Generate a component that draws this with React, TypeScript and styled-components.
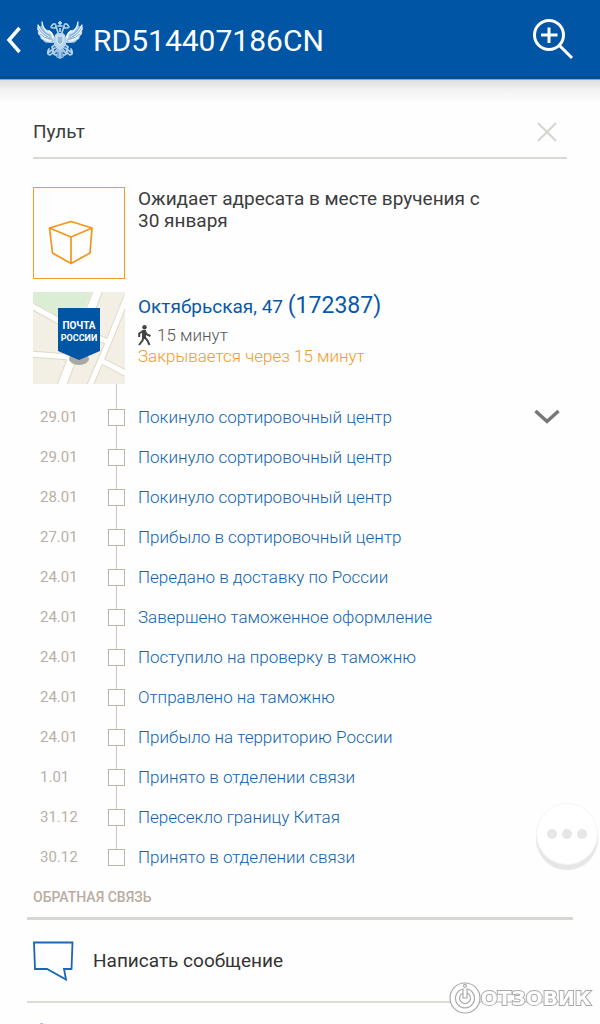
import React from 'react';
import styled, { createGlobalStyle } from 'styled-components';

const GlobalStyle = createGlobalStyle`
  *, *::before, *::after { box-sizing: border-box; }
  body {
    margin: 0;
    background: #fefefe;
    color: #3c3c3c;
    font-family: Roboto, "Noto Sans", sans-serif;
  }
  h1, h2, p, ol { margin: 0; padding: 0; font-weight: 400; }
  svg { display: block; flex: none; }
`;

const Page = styled.div`
  height: 100vh;
  overflow: hidden;
  display: flex;
  flex-direction: column;
`;

const Header = styled.header`
  flex: none;
  height: 79px;
  display: flex;
  align-items: center;
  padding: 3px 26px 0 6px;
  background: #0055a4;
  border-bottom: 3px solid #004c97;
`;

const HeaderShade = styled.div`
  flex: none;
  height: 24px;
  border-top: 1px solid #8aa6c2;
  background: linear-gradient(#dedede, #f3f3f3 45%, #fefefe);
`;

const IconButton = styled.button`
  display: flex;
  padding: 0;
  border: 0;
  background: none;
  cursor: pointer;
`;

const TrackNumber = styled.h1`
  flex: 1;
  margin-left: 10px;
  padding-top: 2px;
  color: #fff;
  font-size: 30px;
  line-height: 36px;
  font-weight: 400;
`;

const Emblem = styled.svg`
  margin-left: 15px;
`;

const Content = styled.main`
  flex: none;
  padding: 0 33px;
`;

const TitleBar = styled.div`
  display: flex;
  align-items: center;
  justify-content: space-between;
  height: 56px;
  padding: 4px 10px 0 0;
  border-bottom: 2px solid #d9d9d3;
`;

const Title = styled.h2`
  font-size: 19px;
  line-height: 24px;
`;

const Card = styled.section`
  display: flex;
  gap: 13px;
`;

const StatusCard = styled(Card)`
  margin-top: 28px;
`;

const OfficeCard = styled(Card)`
  margin-top: 13px;
`;

const ParcelTile = styled.div`
  flex: none;
  width: 92px;
  height: 92px;
  padding: 32px 0 0 14px;
  border: 1px solid #f39b26;
`;

const StatusText = styled.p`
  max-width: 356px;
  padding-top: 1px;
  font-size: 19px;
  line-height: 22px;
`;

const OfficeInfo = styled.div`
  display: flex;
  flex-direction: column;
  align-items: flex-start;
`;

const OfficeLink = styled.a`
  color: #0a58a8;
  font-size: 19px;
  line-height: 28px;
  text-decoration: none;
`;

const PostalIndex = styled.span`
  font-size: 23px;
`;

const Walk = styled.p`
  display: flex;
  align-items: center;
  gap: 6px;
  margin-top: 4px;
  color: #555;
  font-size: 17px;
  line-height: 21px;
  font-weight: 300;
`;

const Closing = styled.p`
  color: #f39b26;
  font-size: 17px;
  line-height: 20px;
  font-weight: 300;
`;

const Timeline = styled.ol`
  padding-top: 13px;
  list-style: none;
  background: linear-gradient(#cdc6bf, #cdc6bf) 83px 0 / 1px calc(100% - 20px) no-repeat;
`;

const Step = styled.li`
  display: grid;
  grid-template-columns: 75px 17px 1fr auto;
  align-items: center;
  height: 40px;
  padding-right: 7px;
`;

const StepDate = styled.time`
  padding-left: 7px;
  color: #b9b0a7;
  font-size: 15px;
  line-height: 20px;
`;

const StepMark = styled.span`
  width: 17px;
  height: 17px;
  border: 1px solid #bdb4ac;
  background: #fefefe;
`;

const StepText = styled.span`
  padding-left: 13px;
  color: #1062ae;
  font-size: 17px;
  line-height: 22px;
  font-weight: 300;
`;

const Feedback = styled.section`
  margin: 0 -6px;
`;

const FeedbackTitle = styled.h2`
  && { font-weight: 500; }
  padding: 10px 6px;
  border-bottom: 3px solid #d9d5cf;
  color: #b9ada2;
  font-size: 14px;
  line-height: 20px;
`;

const FeedbackRow = styled.button`
  display: flex;
  align-items: center;
  gap: 19px;
  width: 100%;
  height: 83px;
  padding: 0 6px;
  border: 0;
  border-bottom: 2px solid #dedad5;
  background: none;
  color: #333;
  font: 400 19px/24px Roboto, "Noto Sans", sans-serif;
  text-align: left;
  cursor: pointer;
`;

const NextRow = styled.div`
  padding: 20px 10px;
`;

const MoreButton = styled.button`
  position: fixed;
  right: 2px;
  bottom: 159px;
  display: flex;
  align-items: center;
  justify-content: center;
  gap: 5px;
  width: 62px;
  height: 62px;
  padding: 0;
  border: 1px solid #f3f3f3;
  border-radius: 50%;
  background: #fff;
  box-shadow: 0 5px 1px #e6e6e6;
  cursor: pointer;
`;

const Dot = styled.span`
  width: 10px;
  height: 10px;
  border-radius: 50%;
  background: #e6e6e6;
`;

const Watermark = styled.div`
  position: fixed;
  right: 9px;
  bottom: 10px;
  display: flex;
  align-items: center;
`;

const WatermarkText = styled.span`
  color: #fefefe;
  font: 700 20px/24px "DejaVu Sans", sans-serif;
  -webkit-text-stroke: 2px #aaa;
  paint-order: stroke fill;
`;

const steps = [
  ['29.01', 'Покинуло сортировочный центр'],
  ['29.01', 'Покинуло сортировочный центр'],
  ['28.01', 'Покинуло сортировочный центр'],
  ['27.01', 'Прибыло в сортировочный центр'],
  ['24.01', 'Передано в доставку по России'],
  ['24.01', 'Завершено таможенное оформление'],
  ['24.01', 'Поступило на проверку в таможню'],
  ['24.01', 'Отправлено на таможню'],
  ['24.01', 'Прибыло на территорию России'],
  ['1.01', 'Принято в отделении связи'],
  ['31.12', 'Пересекло границу Китая'],
  ['30.12', 'Принято в отделении связи'],
];

const Wing = () => (
  <g fill="none" strokeLinecap="round">
    <path d="M5 1Q7 8 11 9Q15 10 17 15L19 22L12 22Q7 22 6 19Q3 18 3 15Q0 13 1 10Q-1 7 1 4L4 6Z" fill="#a9c9e6" />
    <path stroke="#edf5fc" strokeWidth="1.3" d="M5 1Q6 9 12 12M1 4Q4 12 11 15M1 8Q5 15 11 17M2 12Q6 17 12 19M5 17Q9 20 14 20" />
    <path stroke="#5e97cb" strokeWidth=".8" d="M3 5Q6 12 12 14M2 8Q6 14 11 16M3 13Q7 17 13 18M13 11Q17 13 18 19" />
    <path stroke="#fff" strokeWidth="1.6" d="M12 10Q16 13 16 17" />
    <path stroke="#b4d1ea" strokeWidth="1.8" d="M20 22L15 26Q18 32 13 34Q9 33 12 28M18 27L12 31M20 29Q14 34 20 34" />
    <path stroke="#b4d1ea" strokeWidth="1.6" d="M14 6Q16 2 18 3Q20 5 18 7H15M19 5Q20 9 22 14" />
  </g>
);

const Eagle = () => (
  <Emblem width="46" height="38" viewBox="0 0 46 38" aria-hidden="true">
    <Wing />
    <g transform="translate(46 0) scale(-1 1)"><Wing /></g>
    <path d="M18 14Q20 11 23 12Q26 11 28 14L30 20L27 27L23 30L19 27L16 20Z" fill="#b9d5ec" />
    <path d="M20 15h6v6l-3 3-3-3z" fill="#8fb9de" stroke="#e6f1fa" />
    <path d="M19 27L21 29H25L27 27L26 34L27 36L23 38L19 36L20 34Z" fill="#9fc3e3" />
    <path d="M21 31v5M25 31v5" stroke="#4585c2" />
    <path d="M23 0v4M21 2h4M20.500 5h5M23 7v4" stroke="#cfe2f3" strokeWidth="1.500" />
  </Emblem>
);

const OfficeMap = () => (
  <svg width="92" height="92" viewBox="0 0 92 92" role="img" aria-label="ПОЧТА РОССИИ">
    <rect width="92" height="92" fill="#f3efe4" />
    <path d="M0 0H59L45 30L24 25L0 11Z" fill="#dcedd6" />
    <g fill="none" stroke="#e0dac5" strokeWidth="10">
      <path d="M66 -4L27 98" />
      <path strokeWidth="7" d="M-3 13L26 29L75 50M94 4L76 49L67 70L55 98M67 68L100 85M-3 62L36 65" />
    </g>
    <g fill="none" stroke="#fff" strokeWidth="8">
      <path d="M66 -4L27 98" />
      <path strokeWidth="5" d="M-3 13L26 29L75 50M94 4L76 49L67 70L55 98M67 68L100 85M-3 62L36 65" />
    </g>
    <ellipse cx="46" cy="67" rx="10" ry="6" fill="#aaa8a3" />
    <path d="M25 16H67V59L46 68L25 59Z" fill="#0055a4" />
    <g fill="#fff" fontFamily="Roboto, sans-serif" fontWeight="700" textAnchor="middle">
      <text x="46" y="37" fontSize="10">ПОЧТА</text>
      <text x="46" y="49" fontSize="9">РОССИИ</text>
    </g>
  </svg>
);

export default function App() {
  return (
    <Page>
      <GlobalStyle />
      <Header>
        <IconButton aria-label="Назад">
          <svg width="16" height="28" viewBox="0 0 16 28" fill="none" stroke="#fff" strokeWidth="3.5">
            <path d="M13.500 2L3 14L13.500 26" />
          </svg>
        </IconButton>
        <Eagle />
        <TrackNumber>RD514407186CN</TrackNumber>
        <IconButton aria-label="Поиск">
          <svg width="42" height="42" viewBox="0 0 42 42" fill="none" stroke="#fff" strokeWidth="3">
            <circle cx="17" cy="16" r="14.500" />
            <path d="M17 8.500V24M9 16H25.500M27.500 26.500L40 39" />
          </svg>
        </IconButton>
      </Header>
      <HeaderShade />
      <Content>
        <TitleBar>
          <Title>Пульт</Title>
          <IconButton aria-label="Закрыть">
            <svg width="20" height="20" viewBox="0 0 20 20" stroke="#d5d5cf" strokeWidth="2">
              <path d="M1 1L19 19M19 1L1 19" />
            </svg>
          </IconButton>
        </TitleBar>
        <StatusCard>
          <ParcelTile>
            <svg width="46" height="46" viewBox="0 0 46 46" fill="none" stroke="#f3951a" strokeWidth="1.7" strokeLinejoin="round">
              <path d="M1.500 8L23 1.500L44 8L42 33L23 43.500L4.500 33ZM1.500 8L23 17L44 8M23 17V43.500" />
            </svg>
          </ParcelTile>
          <StatusText>Ожидает адресата в месте вручения с 30 января</StatusText>
        </StatusCard>
        <OfficeCard>
          <OfficeMap />
          <OfficeInfo>
            <OfficeLink href="#office">
              Октябрьская, 47 <PostalIndex>(172387)</PostalIndex>
            </OfficeLink>
            <Walk>
              <svg width="13" height="21" viewBox="0 0 13 21" fill="none" stroke="#444" strokeWidth="2" aria-hidden="true">
                <circle cx="6.500" cy="2.200" r="2.200" fill="#444" stroke="none" />
                <path d="M6 5V13" strokeWidth="4" />
                <path d="M5 6L1.200 8.500V12M7 6.500L9 9.500L12.500 11M5.500 12L4.500 15.500L1 20M6.500 12L9.500 15.500L11.500 20" />
              </svg>
              15 минут
            </Walk>
            <Closing>Закрывается через 15 минут</Closing>
          </OfficeInfo>
        </OfficeCard>
        <Timeline>
          {steps.map(([date, text], i) => (
            <Step key={i}>
              <StepDate>{date}</StepDate>
              <StepMark />
              <StepText>{text}</StepText>
              {i === 0 && (
                <IconButton aria-label="Свернуть">
                  <svg width="26" height="16" viewBox="0 0 26 16" fill="none" stroke="#777" strokeWidth="3.500">
                    <path d="M1.500 2L13 12.500L24.500 2" />
                  </svg>
                </IconButton>
              )}
            </Step>
          ))}
        </Timeline>
        <Feedback>
          <FeedbackTitle>ОБРАТНАЯ СВЯЗЬ</FeedbackTitle>
          <FeedbackRow>
            <svg width="41" height="40" viewBox="0 0 41 40" fill="none" stroke="#1a67b3" strokeWidth="1.8" aria-hidden="true">
              <path d="M1 1.500H39.500L38.500 28H31L33 38.500L14 28H2Z" />
            </svg>
            Написать сообщение
          </FeedbackRow>
          <NextRow>
            <svg width="9" height="9" viewBox="0 0 9 9" aria-hidden="true">
              <circle cx="4.500" cy="4.500" r="4" fill="#1a67b3" />
            </svg>
          </NextRow>
        </Feedback>
      </Content>
      <MoreButton aria-label="Ещё">
        <Dot />
        <Dot />
        <Dot />
      </MoreButton>
      <Watermark>
        <svg width="32" height="32" viewBox="0 0 32 32" fill="none" stroke="#aaa" strokeWidth="1.200" aria-hidden="true">
          <circle cx="16" cy="16" r="15" fill="#fefefe" />
          <path d="M14 7A9.500 9.500 0 1 0 18 7V16H14ZM14 11A5.500 5.500 0 1 0 18 11" />
          <circle cx="16" cy="3.800" r="1.500" />
        </svg>
        <WatermarkText>ОТЗОВИК</WatermarkText>
      </Watermark>
    </Page>
  );
}
